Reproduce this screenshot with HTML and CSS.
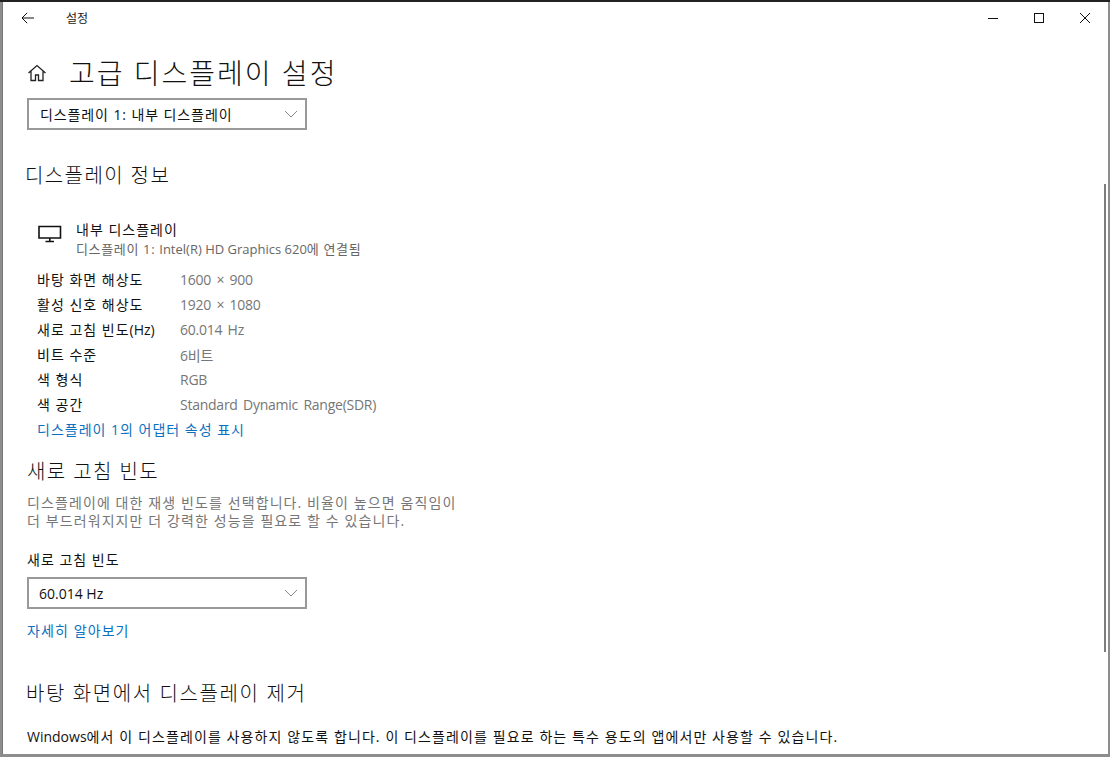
FILE: index.html
```html
<!DOCTYPE html>
<html lang="ko">
<head>
<meta charset="utf-8">
<title>설정</title>
<link rel="stylesheet" href="styles.css">
</head>
<body>
<div class="window">
  <header class="titlebar">
    <div class="back">
      <svg width="14" height="12" viewBox="0 0 14 12"><path d="M13 6H1M6.200 .8 1 6l5.200 5.200" fill="none" stroke="#111" stroke-width="1"/></svg>
    </div>
    <span class="app-title">설정</span>
    <div class="controls">
      <svg width="12" height="12" viewBox="0 0 12 12"><path d="M1 6.500h10" stroke="#111" fill="none"/></svg>
      <svg width="12" height="12" viewBox="0 0 12 12"><rect x="1.500" y="1.500" width="9" height="9" stroke="#111" fill="none"/></svg>
      <svg width="12" height="12" viewBox="0 0 12 12"><path d="M1 1l10 10M11 1 1 11" stroke="#111" fill="none"/></svg>
    </div>
  </header>
  <main class="content">
    <div class="page-head">
      <svg class="home" width="20" height="18" viewBox="0 0 20 18"><path d="M1.500 9 10 1.500 18.500 9M4 7v9.500h4.500v-5.500h3v5.500H16V7" fill="none" stroke="#222" stroke-width="1.300"/></svg>
      <h1>고급 디스플레이 설정</h1>
    </div>
    <div class="select">
      <span class="select-wide">디스플레이 1: 내부 디스플레이</span>
      <svg width="14" height="8" viewBox="0 0 14 8"><path d="M1 1l6 6 6-6" fill="none" stroke="#888"/></svg>
    </div>
    <h2 class="info-title">디스플레이 정보</h2>
    <div class="monitor">
      <svg class="monitor-icon" width="24" height="18" viewBox="0 0 24 18"><path d="M1 1.500h21.500V13H1zM11.800 13v3.500M7.500 16.500h8.500" fill="none" stroke="#111" stroke-width="1.600"/></svg>
      <div>
        <div class="monitor-name">내부 디스플레이</div>
        <div class="monitor-sub">디스플레이 1: <span class="latin">Intel(R) HD Graphics 620</span>에 연결됨</div>
      </div>
    </div>
    <dl class="specs">
      <div class="spec"><dt>바탕 화면 해상도</dt><dd>1600 × 900</dd></div>
      <div class="spec"><dt>활성 신호 해상도</dt><dd>1920 × 1080</dd></div>
      <div class="spec"><dt>새로 고침 빈도<span class="latin">(Hz)</span></dt><dd>60.014 Hz</dd></div>
      <div class="spec"><dt>비트 수준</dt><dd>6비트</dd></div>
      <div class="spec"><dt>색 형식</dt><dd>RGB</dd></div>
      <div class="spec"><dt>색 공간</dt><dd>Standard Dynamic Range(SDR)</dd></div>
    </dl>
    <a class="link adapter">디스플레이 1의 어댑터 속성 표시</a>
    <h2 class="rate-title">새로 고침 빈도</h2>
    <p class="desc">디스플레이에 대한 재생 빈도를 선택합니다. 비율이 높으면 움직임이<br>더 부드러워지지만 더 강력한 성능을 필요로 할 수 있습니다.</p>
    <div class="field-label">새로 고침 빈도</div>
    <div class="select">
      <span class="select-value">60.014 Hz</span>
      <svg width="14" height="8" viewBox="0 0 14 8"><path d="M1 1l6 6 6-6" fill="none" stroke="#888"/></svg>
    </div>
    <a class="link more">자세히 알아보기</a>
    <h2 class="remove-title">바탕 화면에서 디스플레이 제거</h2>
    <p class="remove-text"><span class="latin">Windows</span>에서 이 디스플레이를 사용하지 않도록 합니다. 이 디스플레이를 필요로 하는 특수 용도의 앱에서만 사용할 수 있습니다.</p>
    <div class="scrollbar"></div>
  </main>
</div>
</body>
</html>
```

FILE: styles.css
```css
* { box-sizing: border-box; }
html, body { margin: 0; height: 100%; overflow: hidden; }
body {
  width: 1110px;
  height: 757px;
  padding: 2px 0 0 2px;
  background: linear-gradient(#222 0 2px, #8d8d8d 2px);
  font-family: "Open Sans", "Noto Sans CJK KR", sans-serif;
  color: #111;
}
.window {
  width: 1106px;
  height: 752px;
  background: #fff;
  border-left: 1px solid #777;
  display: flex;
  flex-direction: column;
  overflow: hidden;
}
.titlebar {
  flex: none;
  height: 32px;
  display: flex;
  align-items: center;
}
.back { width: 18px; margin-left: 18px; display: flex; }
.app-title { margin-left: 27px; font-size: 12px; color: #222; }
.controls { margin-left: auto; margin-right: 17px; display: flex; gap: 34px; }
.content { position: relative; flex: 1; padding: 0 0 0 24px; }
.latin { letter-spacing: 0; }
.page-head { display: flex; align-items: center; height: 48px; margin-top: 15px; }
h1 { margin: 0 0 0 22px; font-size: 28px; font-weight: 300; line-height: 48px; color: #111; letter-spacing: 2px; }
h2 { margin: 0; font-size: 20px; font-weight: 300; line-height: 28px; letter-spacing: 1.4px; color: #111; }
.select {
  width: 280px;
  height: 32px;
  margin-top: 1px;
  border: 2px solid #999;
  display: flex;
  align-items: center;
  justify-content: space-between;
  padding: 0 7px 0 11px;
  font-size: 14px;
  color: #111;
}
.select-wide { letter-spacing: 0.9px; }
.select-value { margin-left: -1px; }
.info-title { margin-top: 32px; margin-left: -2px; }
.monitor { display: flex; align-items: center; gap: 14px; margin: 30px 0 0 11px; height: 39px; }
.monitor-icon { align-self: flex-start; margin-top: 5px; }
.monitor-name { font-size: 14px; line-height: 19px; color: #111; letter-spacing: 1px; }
.monitor-sub { font-size: 13px; line-height: 20px; color: #666; letter-spacing: 0.65px; }
.monitor-sub .latin { letter-spacing: 0; }
.specs { margin: 7px 0 0 10px; }
.spec { display: flex; height: 25px; align-items: center; }
dt { width: 143px; font-size: 14px; color: #111; letter-spacing: 1px; }
dd { margin: 0; padding-top: 2px; font-size: 14px; color: #767676; letter-spacing: -0.25px; word-spacing: 2px; }
.link { display: block; color: #0a70c0; font-size: 14px; line-height: 20px; letter-spacing: 1px; }
.adapter { margin: 4px 0 0 10px; }
.rate-title { margin-top: 18px; }
.desc { margin: 8px 0 0; font-size: 14px; line-height: 18px; color: #767676; letter-spacing: 1.1px; }
.field-label { margin-top: 20px; font-size: 14px; line-height: 20px; color: #111; letter-spacing: 1px; }
.field-label + .select { margin-top: 7px; }
.more { margin-top: 12px; letter-spacing: 1.1px; }
.remove-title { margin-top: 39px; margin-left: -1px; letter-spacing: 1.6px; }
.remove-text { margin: 19px 0 0; font-size: 14px; line-height: 20px; color: #111; white-space: nowrap; letter-spacing: 1.1px; }
.scrollbar { position: absolute; top: 150px; right: 2px; width: 2px; height: 468px; background: #7d7d7d; }
```
